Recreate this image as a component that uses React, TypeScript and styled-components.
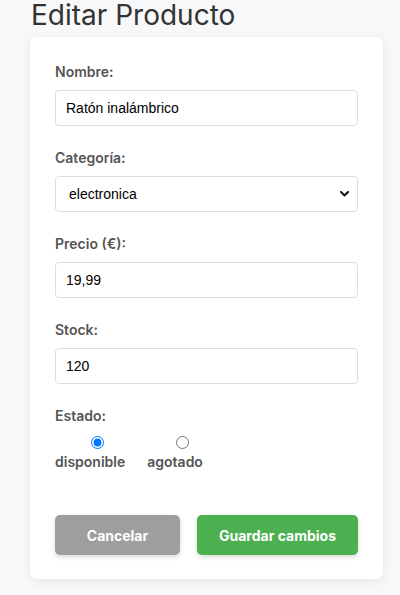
import React from "react";
import { createGlobalStyle, styled } from "styled-components";

const GlobalStyle = createGlobalStyle`
  * {
    box-sizing: border-box;
  }
  html,
  body {
    margin: 0;
    padding: 0;
    background: #f7f8fa;
  }
  body {
    font-family: "Inter", "Noto Sans", sans-serif;
    color: #333;
  }
`;

const estados = ["disponible", "agotado"];

export default function App() {
  const [nombre, setNombre] = React.useState("Ratón inalámbrico");
  const [categoria, setCategoria] = React.useState("electronica");
  const [precio, setPrecio] = React.useState("19,99");
  const [stock, setStock] = React.useState("120");
  const [estado, setEstado] = React.useState("disponible");

  return (
    <>
      <GlobalStyle />
      <Page>
        <Title>Editar Producto</Title>

        <Card onSubmit={(e) => e.preventDefault()}>
          <Field>
            <Label>Nombre:</Label>
            <Input value={nombre} onChange={(e) => setNombre(e.target.value)} />
          </Field>

          <Field>
            <Label>Categoría:</Label>
            <SelectWrap>
              <Select
                value={categoria}
                onChange={(e) => setCategoria(e.target.value)}
              >
                <option value="electronica">electronica</option>
                <option value="hogar">hogar</option>
                <option value="oficina">oficina</option>
              </Select>
              <Chevron viewBox="0 0 9 6" aria-hidden="true">
                <polyline points="1,1 4.5,4.5 8,1" />
              </Chevron>
            </SelectWrap>
          </Field>

          <Field>
            <Label>Precio (€):</Label>
            <Input value={precio} onChange={(e) => setPrecio(e.target.value)} />
          </Field>

          <Field>
            <Label>Stock:</Label>
            <Input value={stock} onChange={(e) => setStock(e.target.value)} />
          </Field>

          <Field>
            <Label>Estado:</Label>
            <RadioGroup>
              {estados.map((opt) => (
                <RadioOption key={opt}>
                  <Radio
                    type="radio"
                    name="estado"
                    value={opt}
                    checked={estado === opt}
                    onChange={() => setEstado(opt)}
                  />
                  {opt}
                </RadioOption>
              ))}
            </RadioGroup>
          </Field>

          <Actions>
            <Button type="button" $variant="cancel">
              Cancelar
            </Button>
            <Button type="submit" $variant="save">
              Guardar cambios
            </Button>
          </Actions>
        </Card>
      </Page>
    </>
  );
}

const Page = styled.div`
  padding: 0 17px 16px 30px;
`;

const Title = styled.h1`
  margin: 0 0 7px;
  padding-left: 1px;
  font-size: 28px;
  font-weight: 400;
  line-height: 30px;
  color: #333;
`;

const Card = styled.form`
  background: #fff;
  border-radius: 7px;
  box-shadow: 0 2px 10px rgba(0, 0, 0, 0.08);
  padding: 25px 25px 24px;
`;

const Field = styled.div`
  margin-bottom: 22px;
`;

const Label = styled.label`
  display: block;
  font-size: 14px;
  font-weight: 600;
  line-height: 20px;
  color: #555;
  margin-bottom: 8px;
`;

const Input = styled.input`
  display: block;
  width: 100%;
  height: 36px;
  padding: 0 10px;
  border: 1px solid #ddd;
  border-radius: 4px;
  font-family: "Liberation Sans", Arial, sans-serif;
  font-size: 14px;
  color: #000;
  background: #fff;
  outline: none;
`;

const SelectWrap = styled.div`
  position: relative;
`;

const Select = styled.select`
  display: block;
  width: 100%;
  height: 36px;
  padding: 0 28px 0 13px;
  border: 1px solid #ddd;
  border-radius: 4px;
  font-family: "Liberation Sans", Arial, sans-serif;
  font-size: 14px;
  color: #000;
  background: #fff;
  outline: none;
  appearance: none;
  -webkit-appearance: none;
`;

const Chevron = styled.svg`
  position: absolute;
  right: 9px;
  top: 15px;
  width: 9px;
  height: 6px;
  fill: none;
  stroke: #111;
  stroke-width: 2;
  stroke-linecap: round;
  stroke-linejoin: round;
  pointer-events: none;
`;

const RadioGroup = styled.div`
  display: flex;
  gap: 22px;
  padding-top: 2px;
`;

const RadioOption = styled.label`
  display: inline-flex;
  flex-direction: column;
  align-items: center;
  font-size: 14px;
  font-weight: 600;
  line-height: 18px;
  color: #555;
`;

const Radio = styled.input`
  width: 13px;
  height: 13px;
  margin: 0 0 4px 14px;
  accent-color: #0075ff;
`;

const Actions = styled.div`
  display: flex;
  gap: 17px;
  margin-top: 44px;
`;

const Button = styled.button<{ $variant: "cancel" | "save" }>`
  height: 40px;
  border: none;
  border-radius: 5px;
  font-family: inherit;
  font-size: 14px;
  font-weight: 700;
  color: #fff;
  cursor: pointer;
  box-shadow: 0 2px 5px rgba(0, 0, 0, 0.15);
  width: ${(p) => (p.$variant === "cancel" ? "125px" : "161px")};
  background: ${(p) => (p.$variant === "cancel" ? "#9e9e9e" : "#4caf50")};
`;
